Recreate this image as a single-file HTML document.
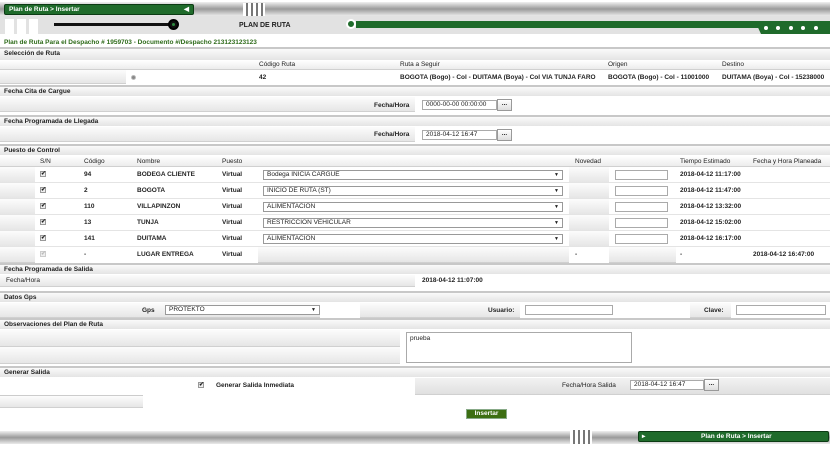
<!DOCTYPE html>
<html><head><meta charset="utf-8"><style>
*{margin:0;padding:0;box-sizing:border-box}
body{width:830px;height:449px;position:relative;background:#fff;font-family:"Liberation Sans",Arial,sans-serif;font-size:6.5px;font-weight:bold;color:#222;overflow:hidden}
div,span{position:absolute}
.h{left:0;width:830px;height:11px;background:linear-gradient(#fafafa,#e4e4e4);border-top:2px solid #c8c8c8;padding:1px 4px;color:#222}
.g{background:linear-gradient(#fcfcfc,#e6e6e6);border-bottom:1px solid #d0d0d0}
.t{white-space:nowrap}
.in{background:#fff;border:1px solid #aaa;height:10px;padding:0 3px;line-height:8px;font-weight:normal;white-space:nowrap}
.btn{background:linear-gradient(#fff,#ddd);border:1px solid #999;width:15px;height:12px;text-align:center;line-height:8px}
.sel{background:#fff;border:1px solid #999;height:10px;padding:0 3px;line-height:8px;font-weight:normal;white-space:nowrap}
.sel:after{content:"▼";position:absolute;right:3px;top:0;font-size:5px}
.cb{width:6px;height:6px;border:1px solid #999;background:#eee;font-size:6px;line-height:5px;text-align:center}
.bar{background:linear-gradient(#f0f0f0,#9a9a9a 50%,#eaeaea)}
</style></head><body>
<div class="bar" style="left:0;top:2px;width:830px;height:14px"></div>
<div style="left:4px;top:4px;width:190px;height:11px;background:#1f6b2b;border:1px solid #0c3b14;color:#fff;padding:1px 4px;border-radius:2px">Plan de Ruta &gt; Insertar<span style="right:4px;top:0">◀</span></div>
<div style="left:243px;top:3px;width:22px;height:13px;background:repeating-linear-gradient(90deg,#fff 0 3px,#777 3px 5px)"></div>
<div style="left:0;top:16px;width:830px;height:18px;background:#e2e2e2"></div>
<div style="left:5px;top:19px;width:9px;height:15px;background:#fff"></div>
<div style="left:17px;top:19px;width:9px;height:15px;background:#fff"></div>
<div style="left:29px;top:19px;width:9px;height:15px;background:#fff"></div>
<div style="left:54px;top:23px;width:120px;height:3px;background:#111"></div>
<div style="left:168px;top:19px;width:11px;height:11px;border-radius:50%;background:#111;border:2px solid #000"><span style="left:2px;top:2px;width:3px;height:3px;background:#2b8a3e;border-radius:50%"></span></div>
<div class="t" style="left:239px;top:22px;font-size:7px">PLAN DE RUTA</div>
<div style="left:346px;top:19px;width:10px;height:10px;border-radius:50%;background:#1f6b2b;border:2px solid #fff"></div>
<div style="left:356px;top:21px;width:474px;height:7px;background:#1f6b2b"></div>
<div style="left:755px;top:21px;width:75px;height:13px;background:#1f6b2b;clip-path:polygon(0 0,100% 0,100% 100%,8% 100%)"></div>
<div style="left:764px;top:26px;width:4px;height:4px;background:#fff;border-radius:50%;box-shadow:12px 0 #fff,25px 0 #fff,37px 0 #fff,50px 0 #fff"></div>
<div class="t" style="left:4px;top:39px;color:#2e6b1a">Plan de Ruta Para el Despacho # 1959703 - Documento #/Despacho 213123123123</div>
<div class="h" style="top:47px;height:13px">Selección de Ruta</div>
<div class="g" style="left:0;top:60px;width:830px;height:10px;background:linear-gradient(#fff,#ececec)"></div>
<div class="t" style="left:259px;top:61px;font-weight:normal">Código Ruta</div>
<div class="t" style="left:400px;top:61px;font-weight:normal">Ruta a Seguir</div>
<div class="t" style="left:608px;top:61px;font-weight:normal">Origen</div>
<div class="t" style="left:722px;top:61px;font-weight:normal">Destino</div>
<div class="g" style="left:0;top:70px;width:126px;height:14px"></div>
<div style="left:131px;top:75px;width:5px;height:5px;border-radius:50%;background:#888;border:1px solid #bbb"></div>
<div class="t" style="left:259px;top:74px">42</div>
<div class="t" style="left:400px;top:74px">BOGOTA (Bogo) - Col - DUITAMA (Boya) - Col VIA TUNJA FARO</div>
<div class="t" style="left:608px;top:74px">BOGOTA (Bogo) - Col - 11001000</div>
<div class="t" style="left:722px;top:74px">DUITAMA (Boya) - Col - 15238000</div>
<div class="h" style="top:85px">Fecha Cita de Cargue</div>
<div class="g" style="left:0;top:97px;width:415px;height:15px"></div>
<div class="t" style="left:374px;top:102px">Fecha/Hora</div>
<div class="in" style="left:422px;top:100px;width:75px">0000-00-00 00:00:00</div>
<div class="btn" style="left:497px;top:99px">...</div>
<div class="h" style="top:115px">Fecha Programada de Llegada</div>
<div class="g" style="left:0;top:127px;width:415px;height:15px"></div>
<div class="t" style="left:374px;top:131px">Fecha/Hora</div>
<div class="in" style="left:422px;top:130px;width:75px">2018-04-12 16:47</div>
<div class="btn" style="left:497px;top:129px">...</div>
<div class="h" style="top:144px">Puesto de Control</div>
<div class="g" style="left:0;top:156px;width:830px;height:11px;background:linear-gradient(#fff,#ececec)"></div>
<div class="t" style="left:40px;top:158px;font-weight:normal">S/N</div>
<div class="t" style="left:84px;top:158px;font-weight:normal">Código</div>
<div class="t" style="left:137px;top:158px;font-weight:normal">Nombre</div>
<div class="t" style="left:222px;top:158px;font-weight:normal">Puesto</div>
<div class="t" style="left:575px;top:158px;font-weight:normal">Novedad</div>
<div class="t" style="left:680px;top:158px;font-weight:normal">Tiempo Estimado</div>
<div class="t" style="left:753px;top:158px;font-weight:normal">Fecha y Hora Planeada</div>
<div class="g" style="left:0;top:167px;width:35px;height:96px;background:repeating-linear-gradient(#fcfcfc 0,#e6e6e6 15px,#ccc 15px 16px)"></div>
<div class="g" style="left:569px;top:167px;width:40px;height:80px;background:repeating-linear-gradient(#fcfcfc 0,#e6e6e6 15px,#ccc 15px 16px)"></div>
<div style="left:0;top:167px;width:830px;height:80px;background:repeating-linear-gradient(transparent 0 15px,#e4e4e4 15px 16px)"></div>
<div class="cb" style="left:40px;top:171px">✔</div><div class="t" style="left:84px;top:171px">94</div><div class="t" style="left:137px;top:171px">BODEGA CLIENTE</div><div class="t" style="left:222px;top:171px">Virtual</div><div class="sel" style="left:263px;top:170px;width:300px">Bodega INICIA CARGUE</div><div class="in" style="left:615px;top:170px;width:53px"></div><div class="t" style="left:680px;top:171px">2018-04-12 11:17:00</div>
<div class="cb" style="left:40px;top:187px">✔</div><div class="t" style="left:84px;top:187px">2</div><div class="t" style="left:137px;top:187px">BOGOTA</div><div class="t" style="left:222px;top:187px">Virtual</div><div class="sel" style="left:263px;top:186px;width:300px">INICIO DE RUTA (ST)</div><div class="in" style="left:615px;top:186px;width:53px"></div><div class="t" style="left:680px;top:187px">2018-04-12 11:47:00</div>
<div class="cb" style="left:40px;top:203px">✔</div><div class="t" style="left:84px;top:203px">110</div><div class="t" style="left:137px;top:203px">VILLAPINZON</div><div class="t" style="left:222px;top:203px">Virtual</div><div class="sel" style="left:263px;top:202px;width:300px">ALIMENTACION</div><div class="in" style="left:615px;top:202px;width:53px"></div><div class="t" style="left:680px;top:203px">2018-04-12 13:32:00</div>
<div class="cb" style="left:40px;top:219px">✔</div><div class="t" style="left:84px;top:219px">13</div><div class="t" style="left:137px;top:219px">TUNJA</div><div class="t" style="left:222px;top:219px">Virtual</div><div class="sel" style="left:263px;top:218px;width:300px">RESTRICCION VEHICULAR</div><div class="in" style="left:615px;top:218px;width:53px"></div><div class="t" style="left:680px;top:219px">2018-04-12 15:02:00</div>
<div class="cb" style="left:40px;top:235px">✔</div><div class="t" style="left:84px;top:235px">141</div><div class="t" style="left:137px;top:235px">DUITAMA</div><div class="t" style="left:222px;top:235px">Virtual</div><div class="sel" style="left:263px;top:234px;width:300px">ALIMENTACION</div><div class="in" style="left:615px;top:234px;width:53px"></div><div class="t" style="left:680px;top:235px">2018-04-12 16:17:00</div>
<div class="cb" style="left:40px;top:251px;color:#bbb;border-color:#ccc">✔</div><div class="t" style="left:84px;top:251px">-</div><div class="t" style="left:137px;top:251px">LUGAR ENTREGA</div><div class="t" style="left:222px;top:251px">Virtual</div>
<div class="g" style="left:258px;top:247px;width:311px;height:16px"></div>
<div class="t" style="left:575px;top:251px">-</div>
<div class="g" style="left:609px;top:247px;width:67px;height:16px"></div>
<div class="t" style="left:680px;top:251px">-</div>
<div class="t" style="left:753px;top:251px">2018-04-12 16:47:00</div>
<div class="h" style="top:263px">Fecha Programada de Salida</div>
<div class="g" style="left:0;top:275px;width:415px;height:12px"></div>
<div class="t" style="left:6px;top:277px;font-weight:normal">Fecha/Hora</div>
<div class="t" style="left:422px;top:277px">2018-04-12 11:07:00</div>
<div class="h" style="top:291px">Datos Gps</div>
<div class="g" style="left:0;top:303px;width:830px;height:15px"></div>
<div class="t" style="left:142px;top:307px">Gps</div>
<div class="sel" style="left:165px;top:305px;width:155px;background:#fff">PROTEKTO</div>
<div style="left:320px;top:303px;width:40px;height:15px;background:#fff"></div>
<div class="t" style="left:488px;top:307px">Usuario:</div>
<div style="left:520px;top:303px;width:170px;height:15px;background:#fff"></div>
<div class="in" style="left:525px;top:305px;width:88px"></div>
<div class="t" style="left:704px;top:307px">Clave:</div>
<div style="left:731px;top:303px;width:99px;height:15px;background:#fff"></div>
<div class="in" style="left:736px;top:305px;width:90px"></div>
<div class="h" style="top:318px">Observaciones del Plan de Ruta</div>
<div class="g" style="left:0;top:330px;width:400px;height:17px"></div>
<div class="g" style="left:0;top:347px;width:400px;height:17px"></div>
<div class="in" style="left:406px;top:332px;width:226px;height:31px;padding:2px 3px">prueba</div>
<div class="h" style="top:366px">Generar Salida</div>
<div class="g" style="left:415px;top:378px;width:415px;height:17px;background:linear-gradient(#f2f2f2,#e0e0e0)"></div>
<div class="cb" style="left:198px;top:382px">✔</div>
<div class="t" style="left:216px;top:382px">Generar Salida Inmediata</div>
<div class="t" style="left:562px;top:382px;font-weight:normal">Fecha/Hora Salida</div>
<div class="in" style="left:630px;top:380px;width:74px;background:#fff">2018-04-12 16:47</div>
<div class="btn" style="left:704px;top:379px">...</div>
<div class="g" style="left:0;top:395px;width:143px;height:13px;border-top:1px solid #ccc"></div>
<div style="left:466px;top:409px;width:41px;height:10px;background:#3c6e12;border:1px solid #8a8;color:#fff;text-align:center;line-height:8px">Insertar</div>
<div class="bar" style="left:0;top:431px;width:830px;height:13px"></div>
<div style="left:570px;top:430px;width:22px;height:14px;background:repeating-linear-gradient(90deg,#fff 0 3px,#777 3px 5px)"></div>
<div style="left:638px;top:431px;width:191px;height:11px;background:#1f6b2b;border:1px solid #0c3b14;color:#fff;padding:1px 4px;border-radius:2px"><span style="left:3px;top:0">▸</span><span style="left:62px;top:1px">Plan de Ruta &gt; Insertar</span></div>
</body></html>
